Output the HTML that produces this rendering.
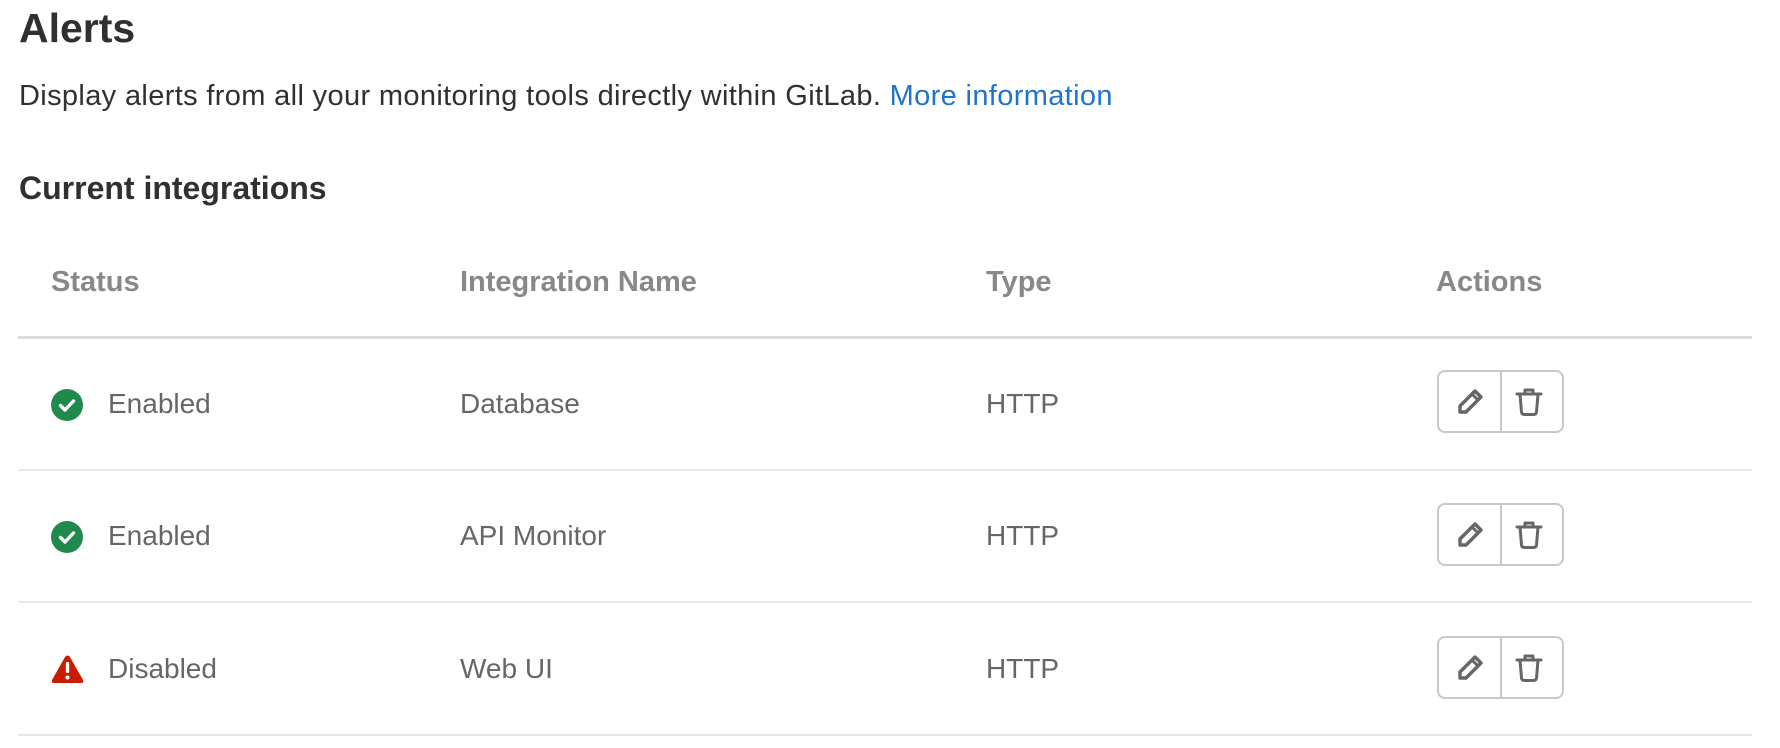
<!DOCTYPE html>
<html><head><style>
body{margin:0;width:1780px;height:748px;background:#fff;font-family:"Liberation Sans",sans-serif;position:relative;overflow:hidden}
.a{position:absolute;white-space:nowrap}
h1{position:absolute;left:19px;top:5px;margin:0;font-size:41px;font-weight:bold;color:#303030}
.desc{left:19px;top:80px;font-size:29px;letter-spacing:0.35px;color:#303030}
.desc span{color:#1f75cb}
.h2{left:19px;top:170px;font-size:32px;font-weight:bold;color:#303030}
.th{top:266px;font-size:29px;font-weight:bold;color:#888}
.line{position:absolute;left:18px;width:1734px;background:#e6e6e6}
.td{font-size:28px;color:#666}
.btn{position:absolute;left:1437px;width:123px;height:59px;border:2px solid #c8c8c8;border-radius:8px}
.btn:after{content:"";position:absolute;left:61px;top:0;bottom:0;width:2px;background:#c8c8c8}
.btn svg{position:absolute;top:15px}
</style></head><body>
<h1>Alerts</h1>
<div class="a desc">Display alerts from all your monitoring tools directly within GitLab. <span>More information</span></div>
<div class="a h2">Current integrations</div>
<div class="a th" style="left:51px">Status</div>
<div class="a th" style="left:460px">Integration Name</div>
<div class="a th" style="left:986px">Type</div>
<div class="a th" style="left:1436px">Actions</div>
<div class="line" style="top:336px;height:3px;background:#dcdcdc"></div>
<div class="line" style="top:469px;height:2px"></div>
<div class="line" style="top:601px;height:2px"></div>
<div class="line" style="top:734px;height:2px"></div>

<svg class="a" style="left:51px;top:389px" width="32" height="32" viewBox="0 0 32 32"><circle cx="16" cy="16" r="16" fill="#1f8a4c"/><path d="M9.5 16.5l4.5 4.5 8.5-9" stroke="#fff" stroke-width="3.4" fill="none" stroke-linecap="round" stroke-linejoin="round"/></svg>
<div class="a td" style="left:108px;top:388px">Enabled</div>
<div class="a td" style="left:460px;top:388px">Database</div>
<div class="a td" style="left:986px;top:388px">HTTP</div>

<svg class="a" style="left:51px;top:521px" width="32" height="32" viewBox="0 0 32 32"><circle cx="16" cy="16" r="16" fill="#1f8a4c"/><path d="M9.5 16.5l4.5 4.5 8.5-9" stroke="#fff" stroke-width="3.4" fill="none" stroke-linecap="round" stroke-linejoin="round"/></svg>
<div class="a td" style="left:108px;top:520px">Enabled</div>
<div class="a td" style="left:460px;top:520px">API Monitor</div>
<div class="a td" style="left:986px;top:520px">HTTP</div>

<svg class="a" style="left:51px;top:654px" width="33" height="30" viewBox="0 0 33 30"><path d="M16.5 1.5Q18 1.5 19 3L32 26Q33 29 30 29H3Q0 29 1 26L14 3Q15 1.5 16.5 1.5Z" fill="#c91c00"/><rect x="14.8" y="8" width="3.4" height="11" rx="1.5" fill="#fff"/><circle cx="16.5" cy="23.5" r="2" fill="#fff"/></svg>
<div class="a td" style="left:108px;top:653px">Disabled</div>
<div class="a td" style="left:460px;top:653px">Web UI</div>
<div class="a td" style="left:986px;top:653px">HTTP</div>

<div class="btn" style="top:370px"><svg style="left:16px" width="30" height="30" viewBox="0 0 30 30"><path d="M20 4l6 6L11 25H5v-6Z" stroke="#666" stroke-width="3.4" fill="none" stroke-linejoin="round"/><path d="M17 7l6 6" stroke="#666" stroke-width="3"/></svg><svg style="left:76px" width="28" height="30" viewBox="0 0 28 30"><path d="M2 7h24M10 7V3h8v4M5 7l1.5 18q.3 2.5 3 2.5h9q2.7 0 3-2.5L23 7" stroke="#666" stroke-width="3" fill="none" stroke-linejoin="round" stroke-linecap="round"/></svg></div>
<div class="btn" style="top:503px"><svg style="left:16px" width="30" height="30" viewBox="0 0 30 30"><path d="M20 4l6 6L11 25H5v-6Z" stroke="#666" stroke-width="3.4" fill="none" stroke-linejoin="round"/><path d="M17 7l6 6" stroke="#666" stroke-width="3"/></svg><svg style="left:76px" width="28" height="30" viewBox="0 0 28 30"><path d="M2 7h24M10 7V3h8v4M5 7l1.5 18q.3 2.5 3 2.5h9q2.7 0 3-2.5L23 7" stroke="#666" stroke-width="3" fill="none" stroke-linejoin="round" stroke-linecap="round"/></svg></div>
<div class="btn" style="top:636px"><svg style="left:16px" width="30" height="30" viewBox="0 0 30 30"><path d="M20 4l6 6L11 25H5v-6Z" stroke="#666" stroke-width="3.4" fill="none" stroke-linejoin="round"/><path d="M17 7l6 6" stroke="#666" stroke-width="3"/></svg><svg style="left:76px" width="28" height="30" viewBox="0 0 28 30"><path d="M2 7h24M10 7V3h8v4M5 7l1.5 18q.3 2.5 3 2.5h9q2.7 0 3-2.5L23 7" stroke="#666" stroke-width="3" fill="none" stroke-linejoin="round" stroke-linecap="round"/></svg></div>
</body></html>
